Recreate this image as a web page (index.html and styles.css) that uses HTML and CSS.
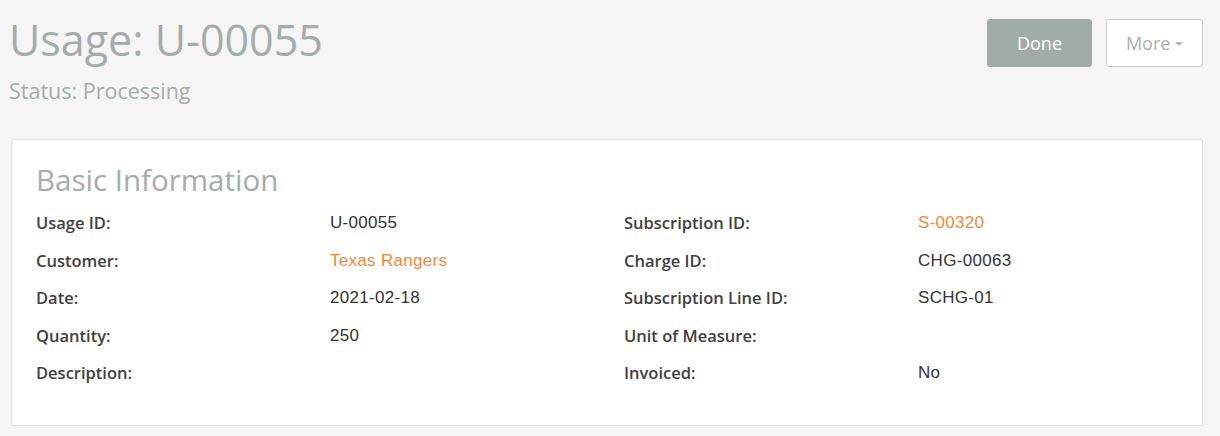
FILE: index.html
```html
<!DOCTYPE html>
<html>
<head>
<meta charset="utf-8">
<link rel="stylesheet" href="styles.css">
</head>
<body>
<div class="page">
  <header class="top">
    <div class="titles">
      <h1 class="title">Usage: U-00055</h1>
      <div class="status">Status: Processing</div>
    </div>
    <div class="actions">
      <button class="btn btn-done">Done</button>
      <button class="btn btn-more">More <span class="caret"></span></button>
    </div>
  </header>
  <section class="card">
    <h2 class="card-title">Basic Information</h2>
    <div class="grid">
      <div class="lbl">Usage ID:</div><div class="val">U-00055</div>
      <div class="lbl">Subscription ID:</div><div class="val link">S-00320</div>
      <div class="lbl">Customer:</div><div class="val link">Texas Rangers</div>
      <div class="lbl">Charge ID:</div><div class="val">CHG-00063</div>
      <div class="lbl">Date:</div><div class="val">2021-02-18</div>
      <div class="lbl">Subscription Line ID:</div><div class="val">SCHG-01</div>
      <div class="lbl">Quantity:</div><div class="val">250</div>
      <div class="lbl">Unit of Measure:</div><div class="val"></div>
      <div class="lbl">Description:</div><div class="val"></div>
      <div class="lbl">Invoiced:</div><div class="val">No</div>
    </div>
  </section>
</div>
</body>
</html>
```
FILE: styles.css
```css
html, body {
  margin: 0;
  padding: 0;
  background: #f5f5f5;
}
body {
  font-family: "Open Sans", "Liberation Sans", sans-serif;
  width: 1220px;
  height: 436px;
  overflow: hidden;
}
.page {
  padding: 0 17px 0 11px;
}
.top {
  display: flex;
  justify-content: space-between;
  align-items: flex-start;
  height: 139px;
}
.titles {
  padding-top: 11px;
}
.title {
  margin: 0;
  font-weight: 400;
  font-size: 43px;
  line-height: 58px;
  color: #a3ada9;
  margin-left: -2px;
}
.status {
  font-size: 21.5px;
  line-height: 26px;
  color: #a3ada9;
  margin-left: -2px;
  margin-top: 9px;
}
.actions {
  display: flex;
  gap: 14px;
  padding-top: 19px;
}
.btn {
  height: 48px;
  font-family: "Open Sans", "Liberation Sans", sans-serif;
  font-size: 18px;
  border-radius: 3px;
  padding: 0;
  cursor: pointer;
}
.btn-done {
  width: 105px;
  background: #a2aca7;
  border: 1px solid #a2aca7;
  color: #ffffff;
}
.btn-more {
  width: 97px;
  background: #ffffff;
  border: 1px solid #c8cdca;
  color: #a9b2ae;
}
.caret {
  display: inline-block;
  width: 0;
  height: 0;
  border-left: 4px solid transparent;
  border-right: 4px solid transparent;
  border-top: 4px solid #a9b2ae;
  vertical-align: middle;
  margin-left: 0;
  margin-top: -2px;
}
.card {
  background: #ffffff;
  border: 1px solid #e2e4e3;
  border-radius: 2px;
  padding: 20px 24px 0 24px;
  box-sizing: border-box;
  height: 287px;
}
.card-title {
  margin: 0;
  font-weight: 400;
  font-size: 29.5px;
  line-height: 40px;
  color: #a3ada9;
}
.grid {
  display: grid;
  grid-template-columns: 294px 294px 294px 1fr;
  grid-auto-rows: 37.5px;
  margin-top: 4px;
}
.lbl, .val {
  line-height: 37px;
}
.lbl {
  font-size: 16.5px;
  font-weight: 600;
  color: #404040;
}
.val {
  font-family: "Liberation Sans", Arial, sans-serif;
  font-size: 17px;
  letter-spacing: 0.3px;
  color: #333333;
}
.link {
  color: #ee8a3c;
}
```
